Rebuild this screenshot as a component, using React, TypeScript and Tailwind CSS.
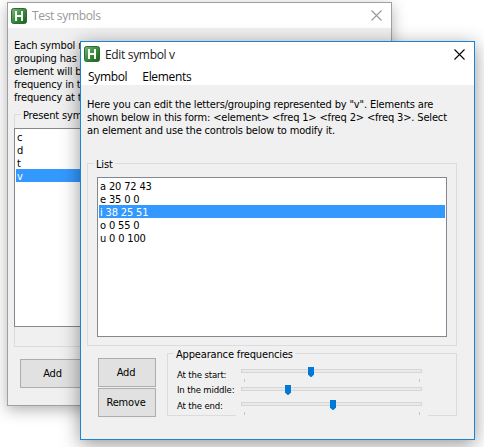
import React from 'react';

const ui = 'font-["DejaVu_Sans_Condensed","DejaVu_Sans",sans-serif] [font-stretch:condensed] tracking-[-0.16px]';
const segoe = 'font-["Open_Sans","Noto_Sans",sans-serif] [font-stretch:normal] tracking-[-0.33px]';

function Logo({ id }: { id: string }) {
  return (
    <svg width="16" height="16" viewBox="0 0 16 16" className="shrink-0">
      <defs>
        <linearGradient id={id} x1="0" y1="0" x2="1" y2="1">
          <stop offset="0" stopColor="#7cb37c" />
          <stop offset="0.5" stopColor="#3d8a40" />
          <stop offset="1" stopColor="#17601b" />
        </linearGradient>
      </defs>
      <rect x="0.5" y="0.5" width="15" height="15" rx="2" fill={`url(#${id})`} stroke="#2c6e2f" />
      <path d="M5 3 V13 M11 3 V13 M5 8 H11" stroke="#f4faf4" strokeWidth="2" fill="none" />
    </svg>
  );
}

function Close({ color }: { color: string }) {
  return (
    <svg width="11" height="11" viewBox="0 0 11 11" className="shrink-0">
      <path d="M0.5 0.5 L10.5 10.5 M10.5 0.5 L0.5 10.5" stroke={color} strokeWidth="1.1" />
    </svg>
  );
}

function Button({ label, className }: { label: string; className: string }) {
  return (
    <button className={`flex items-center justify-center border border-[#adadad] bg-[#e1e1e1] pr-[2px] text-[11px] leading-[13px] ${className}`}>
      {label}
    </button>
  );
}

function Legend({ children }: { children: string }) {
  return <legend className="ml-[6px] h-[13px] px-[2px] leading-[15px]">{children}</legend>;
}

function List({ items, selected, className }: { items: string[]; selected: number; className: string }) {
  return (
    <ul className={`border border-[#828790] bg-white p-px leading-[15px] ${className}`}>
      {items.map((item, i) => (
        <li key={item} className={`h-[13px] pl-px ${i === selected ? 'bg-[#3399ff] text-white' : ''}`}>
          {item}
        </li>
      ))}
    </ul>
  );
}

function Slider({ value, ticks, className }: { value: number; ticks: boolean; className: string }) {
  return (
    <div className={`relative w-[181px] pt-[2px] ${className}`}>
      <div className="h-[4px] border border-[#d6d6d6] bg-[#e7eaea]" />
      <svg width="6" height="10" viewBox="0 0 6 10" className="absolute top-0" style={{ left: value }}>
        <path d="M0 0 H6 V7.5 L3.5 10 H2.5 L0 7.5 Z" fill="#0078d7" />
      </svg>
      {ticks && (
        <div className="mt-[6px] flex h-[3px] justify-between pr-[2px] pl-[3px]">
          <i className="w-px bg-[#c4c4c4]" />
          <i className="w-px bg-[#c4c4c4]" />
        </div>
      )}
    </div>
  );
}

export default function App() {
  return (
    <main className={`relative h-[447px] w-[484px] overflow-hidden bg-white text-[11px] leading-[13px] whitespace-pre text-black ${ui}`}>
      <section className="absolute top-[2px] left-[7px] flex h-[404px] w-[385px] flex-col border border-[#a0a0a0] bg-[#f0f0f0] shadow-[0_4px_14px_rgba(0,0,0,0.3)]">
        <header className={`flex h-[25px] shrink-0 items-center bg-white pr-[9px] pl-[3px] text-[12px] text-[#999] ${segoe}`}>
          <Logo id="logo-back" />
          <h1 className="ml-[5px] grow">Test symbols</h1>
          <Close color="#999" />
        </header>
        <p className="mt-[11px] ml-[6px] h-[65px]">
          {'Each symbol represents a possible letter or grouping, and the\ngrouping has three\nelement will be\nfrequency in the\nfrequency at the end'}
        </p>
        <fieldset className="mt-[4px] ml-[6px] flex h-[239px] w-[368px] flex-col border border-[#dcdcdc]">
          <Legend>Present symbols</Legend>
          <List items={['c', 'd', 't', 'v']} selected={3} className="mt-[7px] -ml-px h-[199px] w-[340px]" />
        </fieldset>
        <Button label="Add" className="mt-[12px] ml-[12px] h-[29px] w-[67px]" />
      </section>

      <section className="absolute top-[41px] left-[80px] flex h-[399px] w-[395px] flex-col border border-[#1883d7] bg-[#f0f0f0] shadow-[0_4px_18px_rgba(0,0,0,0.42)]">
        <header className={`flex h-[24px] shrink-0 items-center bg-white pr-[9px] pl-[3px] text-[12px] ${segoe}`}>
          <Logo id="logo-front" />
          <h1 className="ml-[5px] grow text-[#222]">Edit symbol v</h1>
          <Close color="#000" />
        </header>
        <nav className={`flex h-[19px] shrink-0 items-center gap-[15px] bg-white pt-px pl-[7px] text-[12px] ${segoe}`}>
          <span>Symbol</span>
          <span>Elements</span>
        </nav>
        <p className="mt-[13px] ml-[6px] h-[39px]">
          {'Here you can edit the letters/grouping represented by "v". Elements are\nshown below in this form: <element> <freq 1> <freq 2> <freq 3>. Select\nan element and use the controls below to modify it.'}
        </p>
        <fieldset className="mt-[20px] ml-[6px] h-[189px] w-[370px] border border-[#dcdcdc]">
          <Legend>List</Legend>
          <List
            items={['a 20 72 43', 'e 35 0 0', 'i 38 25 51', 'o 0 55 0', 'u 0 0 100']}
            selected={2}
            className="mt-[7px] ml-[9px] h-[160px] w-[350px]"
          />
        </fieldset>
        <div className="ml-[17px] flex">
          <div className="mt-[12px] flex flex-col gap-px">
            <Button label="Add" className="h-[29px] w-[58px]" />
            <Button label="Remove" className="h-[29px] w-[58px]" />
          </div>
          <fieldset className="mt-px ml-[11px] h-[69px] w-[290px] border border-[#dcdcdc]">
            <Legend>Appearance frequencies</Legend>
            <div className="flex">
              <div className="w-[68px] pt-[8px] pl-[9px] text-[9.5px] tracking-[-0.15px]">
                <div className="h-[15px]">At the start:</div>
                <div className="h-[16px]">In the middle:</div>
                <div className="h-[13px]">At the end:</div>
              </div>
              <div className="h-[56px] w-[192px] bg-[#f0f0f0] pt-[7px] pl-[5px]">
                <Slider value={67} ticks className="h-[18px]" />
                <Slider value={44} ticks={false} className="h-[15px]" />
                <Slider value={89} ticks className="h-[16px]" />
              </div>
            </div>
          </fieldset>
        </div>
      </section>
    </main>
  );
}
